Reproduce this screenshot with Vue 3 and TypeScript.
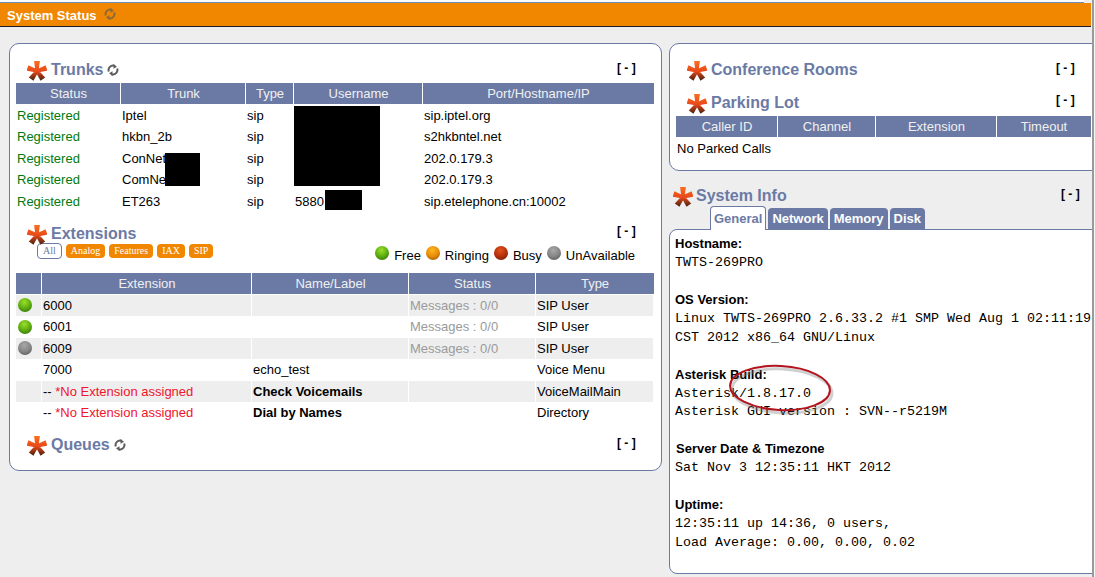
<script setup lang="ts">
const trunks = [
  ['Registered', 'Iptel', 'sip', '', 'sip.iptel.org'],
  ['Registered', 'hkbn_2b', 'sip', '', 's2hkbntel.net'],
  ['Registered', 'ConNet', 'sip', '', '202.0.179.3'],
  ['Registered', 'ComNet', 'sip', '', '202.0.179.3'],
  ['Registered', 'ET263', 'sip', '5880', 'sip.etelephone.cn:10002'],
]
const exts = [
  { dot: 'green', ext: '6000', name: '', status: 'Messages : 0/0', type: 'SIP User', alt: true },
  { dot: 'green', ext: '6001', name: '', status: 'Messages : 0/0', type: 'SIP User', alt: false },
  { dot: 'grey', ext: '6009', name: '', status: 'Messages : 0/0', type: 'SIP User', alt: true },
  { dot: '', ext: '7000', name: 'echo_test', status: '', type: 'Voice Menu', alt: false },
  { dot: '', ext: '', red: true, name: 'Check Voicemails', status: '', type: 'VoiceMailMain', alt: true },
  { dot: '', ext: '', red: true, name: 'Dial by Names', status: '', type: 'Directory', alt: false },
]
// Five tapered arms joined into one outline, so the gradient runs over the whole star
const starPath = [0, 72, 144, 216, 288]
  .map((deg) => {
    const pt = (x: number, y: number) => {
      const a = (deg * Math.PI) / 180
      return `${(x * Math.cos(a) - y * Math.sin(a)).toFixed(2)} ${(x * Math.sin(a) + y * Math.cos(a)).toFixed(2)}`
    }
    return `M${pt(-1.6, 0)}L${pt(-2.9, -10)}L${pt(2.9, -10)}L${pt(1.6, 0)}Z`
  })
  .join('')
</script>

<template>
  <div class="page">
    <svg width="0" height="0" class="defs">
      <defs>
        <linearGradient id="sg" gradientUnits="userSpaceOnUse" x1="0" y1="-10" x2="0" y2="9">
          <stop offset="0" stop-color="#f8701e" />
          <stop offset="0.55" stop-color="#e8481a" />
          <stop offset="1" stop-color="#4e2410" />
        </linearGradient>
        <radialGradient id="dg-green" cx="0.45" cy="0.3" r="0.75">
          <stop offset="0" stop-color="#9be02a" />
          <stop offset="0.6" stop-color="#5cab10" />
          <stop offset="1" stop-color="#3a7a08" />
        </radialGradient>
        <radialGradient id="dg-orange" cx="0.45" cy="0.3" r="0.75">
          <stop offset="0" stop-color="#fdb81e" />
          <stop offset="0.6" stop-color="#e88c08" />
          <stop offset="1" stop-color="#a85f04" />
        </radialGradient>
        <radialGradient id="dg-red" cx="0.45" cy="0.3" r="0.75">
          <stop offset="0" stop-color="#e2531e" />
          <stop offset="0.6" stop-color="#b5300c" />
          <stop offset="1" stop-color="#7e1e06" />
        </radialGradient>
        <radialGradient id="dg-grey" cx="0.45" cy="0.3" r="0.75">
          <stop offset="0" stop-color="#a8a8a8" />
          <stop offset="0.6" stop-color="#868686" />
          <stop offset="1" stop-color="#5e5e5e" />
        </radialGradient>
        <symbol id="star" viewBox="-10 -10 20 20">
          <path :d="starPath" fill="url(#sg)" />
        </symbol>
        <symbol id="sync" viewBox="0 0 12 12">
          <path d="M1.800 7.500A4.500 4.500 0 0 1 7.500 1.800M10.200 4.500A4.500 4.500 0 0 1 4.500 10.200" fill="none" stroke="currentColor" stroke-width="2" />
          <path d="M6.500 0 10 2.700 6.500 4.800zM5.500 12 2 9.300 5.500 7.200z" fill="currentColor" />
        </symbol>
      </defs>
    </svg>

    <div class="content">
      <div class="topstrip"></div>
      <header class="topbar">
        <span>System Status</span>
        <svg class="sync sync-top"><use href="#sync" /></svg>
      </header>

      <main class="columns">
        <section class="panel left">
          <div class="head trunks-head">
            <svg class="star"><use href="#star" /></svg>
            <h2>Trunks</h2>
            <svg class="sync"><use href="#sync" /></svg>
            <b class="toggle">[ - ]</b>
          </div>
          <div class="table trunks hrow"><span>Status</span><span>Trunk</span><span>Type</span><span>Username</span><span>Port/Hostname/IP</span></div>
          <div v-for="(t, i) in trunks" :key="i" class="table trunks row">
            <span class="green">{{ t[0] }}</span><span>{{ t[1] }}</span><span>{{ t[2] }}</span><span>{{ t[3] }}</span><span>{{ t[4] }}</span>
          </div>
          <i class="mask m1"></i><i class="mask m2"></i><i class="mask m3"></i>

          <div class="head ext-head">
            <svg class="star"><use href="#star" /></svg>
            <h2>Extensions</h2>
            <b class="toggle">[ - ]</b>
          </div>
          <div class="filters">
            <div class="pills">
              <span class="pill on">All</span><span class="pill">Analog</span><span class="pill">Features</span><span class="pill">IAX</span><span class="pill">SIP</span>
            </div>
            <div class="legend">
              <svg class="dot lift" viewBox="0 0 14 14"><circle cx="7" cy="7" r="7" fill="url(#dg-green)" /></svg><span>Free</span>
              <svg class="dot lift" viewBox="0 0 14 14"><circle cx="7" cy="7" r="7" fill="url(#dg-orange)" /></svg><span>Ringing</span>
              <svg class="dot lift" viewBox="0 0 14 14"><circle cx="7" cy="7" r="7" fill="url(#dg-red)" /></svg><span>Busy</span>
              <svg class="dot lift" viewBox="0 0 14 14"><circle cx="7" cy="7" r="7" fill="url(#dg-grey)" /></svg><span>UnAvailable</span>
            </div>
          </div>
          <div class="table extt hrow"><span></span><span>Extension</span><span>Name/Label</span><span>Status</span><span>Type</span></div>
          <div v-for="(e, i) in exts" :key="i" class="table extt row erow" :class="{ alt: e.alt }">
            <span class="dotcell"><svg v-if="e.dot" class="dot" viewBox="0 0 14 14"><circle cx="7" cy="7" r="7" :fill="`url(#dg-${e.dot})`" /></svg></span>
            <span v-if="e.red">-- <em>*No Extension assigned</em></span><span v-else>{{ e.ext }}</span>
            <span :class="{ strong: e.red }">{{ e.name }}</span>
            <span class="muted">{{ e.status }}</span>
            <span>{{ e.type }}</span>
          </div>

          <div class="head queues-head">
            <svg class="star"><use href="#star" /></svg>
            <h2>Queues</h2>
            <svg class="sync"><use href="#sync" /></svg>
            <b class="toggle">[ - ]</b>
          </div>
        </section>

        <div class="right">
          <section class="panel top-right">
            <div class="head conf-head">
              <svg class="star"><use href="#star" /></svg>
              <h2>Conference Rooms</h2>
              <b class="toggle">[ - ]</b>
            </div>
            <div class="head park-head">
              <svg class="star"><use href="#star" /></svg>
              <h2>Parking Lot</h2>
              <b class="toggle">[ - ]</b>
            </div>
            <div class="table park hrow"><span>Caller ID</span><span>Channel</span><span>Extension</span><span>Timeout</span></div>
            <p class="noparked">No Parked Calls</p>
          </section>

          <section class="info">
            <div class="head info-head">
              <svg class="star"><use href="#star" /></svg>
              <h2>System Info</h2>
              <b class="toggle">[ - ]</b>
            </div>
            <div class="tabs">
              <span class="tab active">General</span><span class="tab">Network</span><span class="tab">Memory</span><span class="tab">Disk</span>
            </div>
            <div class="infobox">
              <h4>Hostname:</h4>
              <pre>TWTS-269PRO</pre>
              <h4 class="gap">OS Version:</h4>
              <pre>Linux TWTS-269PRO 2.6.33.2 #1 SMP Wed Aug 1 02:11:19
CST 2012 x86_64 GNU/Linux</pre>
              <h4 class="gap">Asterisk Build:</h4>
              <pre>Asterisk/1.8.17.0
Asterisk GUI version : SVN--r5219M</pre>
              <h4 class="gap shift">Server Date &amp; Timezone</h4>
              <pre>Sat Nov 3 12:35:11 HKT 2012</pre>
              <h4 class="gap">Uptime:</h4>
              <pre>12:35:11 up 14:36, 0 users,
Load Average: 0.00, 0.00, 0.02</pre>
            </div>
          </section>
        </div>
      </main>

      <svg class="ring" viewBox="0 0 110 56">
        <ellipse cx="55" cy="28" rx="50" ry="22" fill="none" stroke="#777" stroke-opacity=".35" stroke-width="3" transform="translate(2 3) rotate(3 55 28)" />
        <ellipse cx="55" cy="28" rx="50" ry="22" fill="none" stroke="#b4141e" stroke-width="2" transform="rotate(3 55 28)" />
      </svg>
    </div>
    <div class="edge"></div>
  </div>
</template>

<style>
html, body { margin: 0; background: #fff; }
</style>

<style scoped>
.page {
  display: flex;
  width: 1095px;
  height: 577px;
  overflow: hidden;
  background: #f6f6f6;
  font-family: "Liberation Sans", Arial, sans-serif;
  font-size: 13px;
  color: #000;
}
.defs { position: absolute; }
.content {
  position: relative;
  width: 1092px;
  height: 577px;
  overflow: hidden;
  background: #eeeeee;
  flex: none;
}
.edge { width: 2px; height: 577px; background: #9a9a9a; flex: none; }
.topstrip {
  height: 2px;
  background: #fff;
  border-bottom: 1px solid #6d8fc0;
  box-sizing: content-box;
  margin-right: 8px;
}
.topbar {
  box-sizing: border-box;
  height: 24px;
  width: 1091px;
  border-bottom: 1px solid #1c1c2c;
  background: #f18700;
  color: #fff;
  font-weight: bold;
  font-size: 13px;
  padding: 1px 0 0 7px;
  display: flex;
  align-items: center;
  gap: 7px;
}
.sync { width: 12px; height: 12px; margin-left: 4px; flex: none; color: #5c5c5c; }
.sync-top { margin-left: 0; margin-top: -3px; color: #8a6a3a; }
.columns {
  display: flex;
  align-items: flex-start;
  gap: 7px;
  padding: 16px 0 0 9px;
}
.panel {
  position: relative;
  box-sizing: border-box;
  background: #fff;
  border: 1px solid #6b7aa5;
  border-radius: 10px;
}
.left { width: 653px; height: 428px; padding: 0 6px; flex: none; }
.right { width: 426px; flex: none; }
.top-right {
  height: 128px;
  width: 440px;
  padding: 0 6px;
}
.head { display: flex; align-items: center; position: relative; height: 24px; }
.head h2 {
  margin: 0;
  font-size: 16px;
  line-height: 24px;
  font-weight: bold;
  color: #6b7aa5;
}
.star { width: 20px; height: 20px; flex: none; margin: 2px 4px 0 0; }
.toggle {
  position: absolute;
  font-size: 12px;
  top: 0;
  line-height: 18px;
  white-space: pre;
}
.trunks-head { padding: 14px 0 0 11px; margin-bottom: 1px; }
.trunks-head .toggle { left: 601px; top: 15px; }
.ext-head { padding: 10px 0 0 11px; margin-bottom: -3px; }
.ext-head .toggle { left: 601px; top: 10px; }
.queues-head { padding: 10px 0 0 11px; }
.queues-head .toggle { left: 601px; top: 11px; }
.conf-head { padding: 14px 0 0 11px; }
.conf-head .toggle { left: 380px; top: 15px; }
.park-head { padding: 9px 0 0 11px; margin-bottom: 1px; }
.park-head .toggle { left: 380px; top: 9px; }
.table { display: grid; }
.trunks { grid-template-columns: 105px 125px 48px 129px 231px; width: 638px; }
.extt { grid-template-columns: 26px 210px 157px 127px 118px; width: 638px; }
.park { grid-template-columns: 102px 98px 121px 94px; width: 415px; }
.hrow { height: 21px; }
.trunks.hrow { margin-bottom: 0.75px; }
.hrow span {
  background: #6b7aa5;
  color: #f0f0f0;
  text-align: center;
  line-height: 21px;
  border-left: 1px solid #fff;
  margin-left: -1px;
}
.hrow span:first-child { border-left: 0; margin-left: 0; }
.row { height: 21.5px; line-height: 21.5px; }
.row span { padding-left: 1px; white-space: nowrap; overflow: visible; }
.green { color: #007a0e; }
.mask { position: absolute; background: #000; }
.m1 { left: 284px; top: 62px; width: 86px; height: 80px; }
.m2 { left: 155px; top: 109px; width: 35px; height: 33px; }
.m3 { left: 315px; top: 146px; width: 37px; height: 20px; }
.filters {
  display: flex;
  justify-content: space-between;
  align-items: flex-start;
  height: 29.25px;
}
.pills {
  display: flex;
  gap: 4px;
  padding-left: 21px;
  font-family: "Liberation Serif", serif;
  font-size: 10px;
}
.pill {
  background: #f18700;
  color: #fff;
  border-radius: 4px;
  padding: 0 5px;
  height: 14px;
  line-height: 14px;
  margin-top: 1px;
}
.pill.on {
  background: #fff;
  color: #6b7aa5;
  border: 1px solid #6b7aa5;
  margin-top: 0;
}
.legend { display: flex; align-items: center; gap: 5px; padding: 2px 20px 0 0; height: 18px; }
.legend span { margin-top: 3px; }
.dot { width: 14px; height: 14px; display: block; }
.lift { margin-top: -2px; }
.erow { height: 21.6px; }
.erow span { padding-left: 1px; margin-top: 1px; }
.erow.alt span { background: #eeeeee; margin-right: 1px; }
.dotcell { display: flex; align-items: center; padding-left: 2px !important; }
em { color: #f0142c; font-style: normal; }
.strong { font-weight: bold; }
.muted { color: #9a9a9a; }
.noparked { margin: 0; padding: 5px 0 0 1px; line-height: 14px; }
.info { margin-top: 13px; width: 440px; position: relative; }
.info-head { padding-left: 4px; }
.info-head .star { margin-right: 3px; }
.info-head .toggle { left: 392px; top: 1px; }
.tabs { display: flex; padding-left: 41px; margin-top: -3px; gap: 2px; height: 24px; align-items: flex-end; position: relative; z-index: 1; }
.tab {
  background: #6b7aa5;
  color: #fff;
  font-weight: bold;
  border-radius: 4px 4px 0 0;
  font-size: 13px;
  padding: 0 4px;
  height: 21px;
  line-height: 21px;
}
.tab.active {
  background: #fff;
  color: #6b7aa5;
  border: 1px solid #6b7aa5;
  border-bottom: 0;
  height: 23px;
  line-height: 24px;
  margin-bottom: -1px;
  padding: 0 3px;
}
.infobox {
  box-sizing: border-box;
  background: #fff;
  border: 1px solid #6b7aa5;
  border-radius: 8px;
  height: 345px;
  padding: 6px 4px 0 5px;
}
h4 {
  margin: 0;
  font-size: 13px;
  line-height: 16px;
  font-weight: bold;
}
h4.gap { margin-top: 19.5px; }
h4.shift { margin-left: 1px; }
pre {
  margin: 2px 0 0;
  font-family: "Liberation Mono", monospace;
  font-size: 13.33px;
  line-height: 18.5px;
}
.ring { position: absolute; left: 725px; top: 360px; width: 110px; height: 56px; pointer-events: none; }
</style>
